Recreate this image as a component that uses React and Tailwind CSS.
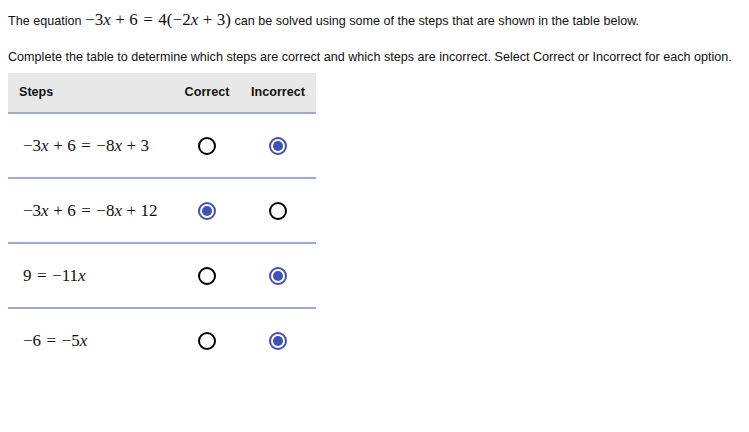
import { useState } from "react";

// tokens: strings in a group are upright, a bare string is an italic variable; "u−" is a unary minus
const rows = [
  { parts: [["u−", "3"], "x", ["+", "6", "=", "u−", "8"], "x", ["+", "3"]], answer: "incorrect" },
  { parts: [["u−", "3"], "x", ["+", "6", "=", "u−", "8"], "x", ["+", "12"]], answer: "correct" },
  { parts: [["9", "=", "u−", "11"], "x"], answer: "incorrect" },
  { parts: [["u−", "6", "=", "u−", "5"], "x"], answer: "incorrect" },
];

function Math({ parts }) {
  return (
    <span className="whitespace-nowrap text-[17px] text-[#111]" style={{ fontFamily: '"Liberation Serif", serif' }}>
      {parts.map((p, i) =>
        typeof p === "string" ? (
          <i key={i}>{p}</i>
        ) : (
          p.map((t, j) => {
            const k = i + "-" + j;
            if (t === "u−") return <span key={k}>−</span>;
            if (t === "=") return <span key={k} className="mx-[5.5px]">=</span>;
            if (t === "+" || t === "−") return <span key={k} className="mx-[4.5px]">{t}</span>;
            return <span key={k}>{t}</span>;
          })
        )
      )}
    </span>
  );
}

function Radio({ checked, onClick }) {
  return (
    <button
      onClick={onClick}
      className={`flex h-[18px] w-[18px] items-center justify-center rounded-full border-2 ${checked ? "border-[#3f51b5]" : "border-black"}`}
    >
      {checked && <span className="h-[10px] w-[10px] rounded-full bg-[#3f51b5]" />}
    </button>
  );
}

export default function App() {
  const [answers, setAnswers] = useState(rows.map((r) => r.answer));

  return (
    <div className="bg-white p-2 text-[12.6px] text-[#111]" style={{ fontFamily: '"Liberation Sans", Arial, sans-serif' }}>
      <p className="leading-[24px]">
        The equation{" "}
        <Math parts={[["u−", "3"], "x", ["+", "6", "=", "4(", "u−", "2"], "x", ["+", "3)"]]} /> can be solved using
        some of the steps that are shown in the table below.
      </p>
      <p className="mt-3 leading-[24px]">
        Complete the table to determine which steps are correct and which steps are incorrect. Select Correct or
        Incorrect for each option.
      </p>
      <table className="mt-[4px] w-[308px] border-collapse">
        <thead>
          <tr className="h-[40px] border-b-2 border-[#9fa8da] bg-[#e8e8e8] font-bold">
            <th className="w-[166px] pl-[11px] text-left">Steps</th>
            <th className="w-[66px] text-center">Correct</th>
            <th className="text-center">Incorrect</th>
          </tr>
        </thead>
        <tbody>
          {rows.map((r, i) => (
            <tr key={i} className={`h-[65px] ${i < rows.length - 1 ? "border-b-2 border-[#9fa8da]" : ""}`}>
              <td className="pl-[15px]">
                <Math parts={r.parts} />
              </td>
              <td>
                <div className="flex justify-center">
                  <Radio
                    checked={answers[i] === "correct"}
                    onClick={() => setAnswers((a) => a.map((v, k) => (k === i ? "correct" : v)))}
                  />
                </div>
              </td>
              <td>
                <div className="flex justify-center">
                  <Radio
                    checked={answers[i] === "incorrect"}
                    onClick={() => setAnswers((a) => a.map((v, k) => (k === i ? "incorrect" : v)))}
                  />
                </div>
              </td>
            </tr>
          ))}
        </tbody>
      </table>
    </div>
  );
}
